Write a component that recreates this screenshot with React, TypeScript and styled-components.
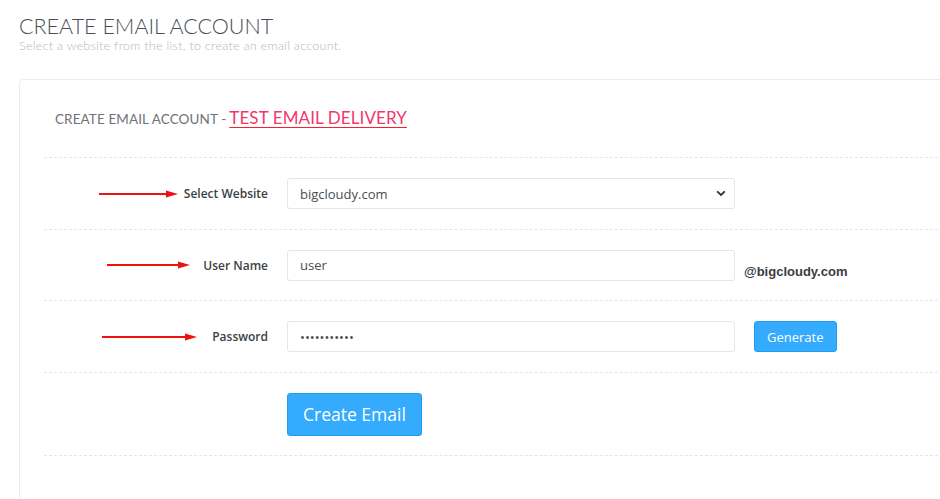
import { styled, createGlobalStyle } from 'styled-components'

const GlobalStyle = createGlobalStyle`
  html, body {
    margin: 0;
    padding: 0;
    background: #fff;
    overflow: hidden;
  }
  body {
    font-family: "Open Sans", "Liberation Sans", sans-serif;
  }
`

const Page = styled.main`
  padding: 13px 0 0 19px;
  width: 960px;
`

const PageTitle = styled.h1`
  margin: 0;
  font-family: Lato, "Open Sans", sans-serif;
  font-weight: 300;
  font-size: 21.5px;
  line-height: 26px;
  color: #4a4f57;
`

const PageSubtitle = styled.p`
  margin: 0;
  font-family: Lato, "Open Sans", sans-serif;
  font-weight: 300;
  font-size: 12.5px;
  line-height: 14px;
  letter-spacing: 0.28px;
  color: #b5b8bd;
`

const Card = styled.section`
  margin-top: 26px;
  border: 1px solid #e6ecf2;
  border-radius: 4px;
  padding: 27px 0 40px 24px;
  min-height: 420px;
`

const CardHeader = styled.h2`
  margin: 0 0 0 11px;
  padding-bottom: 29px;
  font-family: Lato, "Open Sans", sans-serif;
  font-weight: 400;
  font-size: 13.5px;
  letter-spacing: 0.1px;
  color: #6f7278;
  display: flex;
  align-items: baseline;
  gap: 3px;

  a {
    font-size: 17px;
    color: #f2386a;
    text-decoration: underline;
    text-decoration-color: #f5222d;
    text-underline-offset: 3px;
  }
`

const FormRow = styled.div`
  display: grid;
  grid-template-columns: 224px 448px auto;
  column-gap: 19px;
  align-items: center;
  border-top: 1px dashed #dfe7ef;
  padding: 20px 0 19.5px;
  min-height: 31px;
`

const FormEnd = styled.div`
  border-top: 1px dashed #dfe7ef;
`

const LabelCell = styled.label`
  display: flex;
  justify-content: flex-end;
  align-items: center;
  font-size: 12px;
  font-weight: 600;
  color: #3b3f45;
`

const Arrow = styled.svg<{ $gap: number }>`
  display: block;
  margin-right: ${p => p.$gap}px;
`

const Field = styled.input`
  box-sizing: border-box;
  width: 448px;
  height: 31px;
  border: 1px solid #e1e7ee;
  border-radius: 3px;
  padding: 0 12px;
  font-family: "Open Sans", sans-serif;
  font-size: 13px;
  color: #4a4d52;
  background: #fff;
  outline: none;
`

const SelectBox = styled.div`
  position: relative;
  width: 448px;

  select {
    box-sizing: border-box;
    width: 100%;
    height: 31px;
    border: 1px solid #e1e7ee;
    border-radius: 3px;
    padding: 0 12px;
    font-family: "Open Sans", sans-serif;
    font-size: 13px;
    color: #4a4d52;
    background: #fff;
    appearance: none;
    outline: none;
  }

  svg {
    position: absolute;
    right: 9px;
    top: 12px;
    pointer-events: none;
  }
`

const Domain = styled.span`
  font-family: "Liberation Sans", Arial, sans-serif;
  font-weight: 700;
  font-size: 13px;
  color: #3a3d42;
  margin-left: -10px;
  padding-top: 12px;
`

const Button = styled.button<{ $big?: boolean }>`
  justify-self: start;
  border: 1px solid #1f9ff0;
  border-radius: 3px;
  background: #34abfd;
  color: #fff;
  font-family: "Open Sans", sans-serif;
  font-size: ${p => (p.$big ? '17.5px' : '13px')};
  height: ${p => (p.$big ? '43px' : '31px')};
  padding: 0 ${p => (p.$big ? '15px' : '12px')};
  cursor: pointer;
`

interface ArrowProps {
  length: number
  gap: number
}

const RedArrow = ({ length, gap }: ArrowProps): JSX.Element => (
  <Arrow $gap={gap} width={length} height="8" viewBox={`0 0 ${length} 8`}>
    <line x1="0" y1="4" x2={length - 10} y2="4" stroke="#ee1111" strokeWidth="2" />
    <polygon points={`${length - 12},0.5 ${length},4 ${length - 12},7.5`} fill="#ee1111" />
  </Arrow>
)

const Chevron = (): JSX.Element => (
  <svg width="10" height="7" viewBox="0 0 10 7">
    <path d="M1.2 1.3 L5 5 L8.8 1.3" fill="none" stroke="#333" strokeWidth="1.8" />
  </svg>
)

export default function App (): JSX.Element {
  return (
    <>
      <GlobalStyle />
      <Page>
        <PageTitle>CREATE EMAIL ACCOUNT</PageTitle>
        <PageSubtitle>Select a website from the list, to create an email account.</PageSubtitle>
        <Card>
          <CardHeader>
            <span>CREATE EMAIL ACCOUNT -</span>
            <a href="#">TEST EMAIL DELIVERY</a>
          </CardHeader>

          <FormRow>
            <LabelCell>
              <RedArrow length={79} gap={6} />
              Select Website
            </LabelCell>
            <SelectBox>
              <select defaultValue="bigcloudy.com">
                <option>bigcloudy.com</option>
              </select>
              <Chevron />
            </SelectBox>
          </FormRow>

          <FormRow>
            <LabelCell>
              <RedArrow length={83} gap={13} />
              User Name
            </LabelCell>
            <Field type="text" defaultValue="user" />
            <Domain>@bigcloudy.com</Domain>
          </FormRow>

          <FormRow>
            <LabelCell>
              <RedArrow length={95} gap={15} />
              Password
            </LabelCell>
            <Field type="password" defaultValue="secretpass1" />
            <Button>Generate</Button>
          </FormRow>

          <FormRow>
            <span />
            <Button $big>Create Email</Button>
          </FormRow>
          <FormEnd />
        </Card>
      </Page>
    </>
  )
}
